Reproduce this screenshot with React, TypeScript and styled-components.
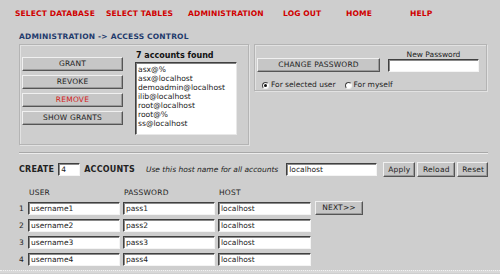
import React from 'react';
import styled, { createGlobalStyle } from 'styled-components';

const GlobalStyle = createGlobalStyle`
  html, body {
    margin: 0;
    padding: 0;
    background: #cecece;
  }
  body {
    font-family: 'DejaVu Sans', Verdana, sans-serif;
    font-size: 8px;
    color: #222222;
  }
`;

const Page = styled.div`
  width: 500px;
  height: 274px;
  box-sizing: border-box;
  background: #cecece;
  overflow: hidden;
  display: flex;
  flex-direction: column;
`;

const Nav = styled.nav`
  display: flex;
  padding: 9px 0 0 15px;
  height: 10px;
`;

const NavLink = styled.a<{ $w: number }>`
  width: ${p => p.$w}px;
  flex: none;
  color: #d00000;
  font-weight: bold;
  font-size: 7.6px;
  text-decoration: none;
  letter-spacing: 0.1px;
  line-height: 10px;
`;

const Title = styled.h1`
  margin: 13px 0 0 19px;
  font-size: 7.5px;
  font-weight: bold;
  color: #1e3a6c;
  line-height: 10px;
  letter-spacing: 0.2px;
`;

const TopRow = styled.div`
  display: flex;
  align-items: flex-start;
  gap: 5px;
  margin: 2px 0 0 19px;
`;

const Panel = styled.div<{ $w: number; $h: number }>`
  width: ${p => p.$w}px;
  height: ${p => p.$h}px;
  box-sizing: border-box;
  border: 1px solid #b4b4b4;
  box-shadow: inset 1px 1px 0 #e2e2e2, 1px 1px 0 #e2e2e2;
  display: flex;
`;

const ButtonColumn = styled.div`
  display: flex;
  flex-direction: column;
  gap: 4px;
  margin: 12px 0 0 2px;
`;

const GrayButton = styled.button<{ $w?: number; $h?: number; $danger?: boolean }>`
  width: ${p => (p.$w ? `${p.$w}px` : 'auto')};
  height: ${p => p.$h ?? 14}px;
  padding: 0 4px;
  box-sizing: border-box;
  background: #c6c6c6;
  border: 1px solid;
  border-color: #f0f0f0 #555555 #555555 #f0f0f0;
  box-shadow: inset -1px -1px 0 #9a9a9a;
  font-family: 'DejaVu Sans', Verdana, sans-serif;
  font-size: 7.5px;
  color: ${p => (p.$danger ? '#d42020' : '#222222')};
  letter-spacing: 0.2px;
  line-height: 12px;
  cursor: pointer;
`;

const ListColumn = styled.div`
  display: flex;
  flex-direction: column;
  margin: 6px 0 0 12px;
`;

const ListLabel = styled.div`
  font-weight: bold;
  font-size: 8px;
  color: #111111;
  line-height: 10px;
  margin-left: 1px;
`;

const ListBox = styled.div`
  width: 102px;
  height: 73px;
  box-sizing: border-box;
  margin-top: 1px;
  background: #ffffff;
  border: 1px solid;
  border-color: #404040 #e8e8e8 #e8e8e8 #404040;
  box-shadow: inset 1px 1px 0 #808080;
  padding: 2px 0 0 2px;
`;

const ListItem = styled.div`
  line-height: 9px;
  font-size: 7.6px;
  color: #222222;
`;

const PwPanelBody = styled.div`
  display: flex;
  flex-direction: column;
  padding: 5px 0 0 2px;
`;

const PwTop = styled.div`
  display: flex;
  align-items: flex-end;
  gap: 8px;
`;

const PwField = styled.div`
  display: flex;
  flex-direction: column;
  align-items: center;
`;

const SmallLabel = styled.div`
  font-size: 7.5px;
  line-height: 9px;
  color: #222222;
`;

const TextInput = styled.input<{ $w: number }>`
  width: ${p => p.$w}px;
  height: 13px;
  box-sizing: border-box;
  padding: 0 2px;
  background: #ffffff;
  border: 1px solid;
  border-color: #404040 #f4f4f4 #f4f4f4 #404040;
  box-shadow: inset 1px 1px 0 #8a8a8a;
  font-family: 'DejaVu Sans', Verdana, sans-serif;
  font-size: 7.5px;
  color: #222222;
  outline: none;
`;

const CountInput = styled(TextInput)`
  margin: 0 4px;
`;

const RadioRow = styled.div`
  display: flex;
  align-items: center;
  margin: 8px 0 0 5px;
  font-size: 7.5px;
`;

const RadioDot = styled.span<{ $on?: boolean }>`
  width: 7px;
  height: 7px;
  box-sizing: border-box;
  border-radius: 50%;
  background: #ffffff;
  border: 1px solid;
  border-color: #404040 #f4f4f4 #f4f4f4 #404040;
  margin-right: 2px;
  display: flex;
  align-items: center;
  justify-content: center;
  &::after {
    content: '';
    width: 3px;
    height: 3px;
    border-radius: 50%;
    background: ${p => (p.$on ? '#111111' : 'transparent')};
  }
`;

const RadioText = styled.span`
  margin-right: 9px;
  line-height: 10px;
`;

const Separator = styled.div`
  margin: 7px 12px 0 19px;
  height: 0;
  border-top: 1px solid #a8a8a8;
  border-bottom: 1px solid #ececec;
`;

const CreateRow = styled.div`
  display: flex;
  align-items: center;
  margin: 8px 0 0 19px;
  height: 15px;
`;

const BoldWord = styled.span`
  font-weight: bold;
  font-size: 8px;
  color: #222222;
  letter-spacing: 0.2px;
`;

const Hint = styled.span`
  font-style: italic;
  font-size: 7.5px;
  color: #222222;
  margin: 0 8px 0 11px;
`;

const ButtonGroup = styled.div`
  display: flex;
  gap: 2px;
  margin-left: 6px;
`;

const Grid = styled.div`
  display: grid;
  grid-template-columns: 9px 95px 95px 97px auto;
  grid-template-rows: 9px 14px 13px 13px 13px;
  row-gap: 4px;
  margin: 11px 0 0 19px;
  align-items: center;
`;

const HeadCell = styled.div`
  font-size: 7.5px;
  color: #222222;
  line-height: 9px;
  letter-spacing: 0.2px;
  margin-left: 1px;
`;

const RowNum = styled.div`
  font-size: 7.5px;
  color: #222222;
`;

const BottomRule = styled.div`
  margin-top: auto;
  margin-bottom: 1px;
  height: 2px;
  border-top: 1px dotted #f2f2f2;
  background: #d8d8d8;
`;

const accounts = [
  'asx@%',
  'asx@localhost',
  'demoadmin@localhost',
  'ilib@localhost',
  'root@localhost',
  'root@%',
  'ss@localhost',
];

const navItems: [string, number][] = [
  ['SELECT DATABASE', 91],
  ['SELECT TABLES', 82],
  ['ADMINISTRATION', 95],
  ['LOG OUT', 63],
  ['HOME', 64],
  ['HELP', 40],
];

const rows = [1, 2, 3, 4];

export default function App() {
  return (
    <Page>
      <GlobalStyle />
      <Nav>
        {navItems.map(([label, w]) => (
          <NavLink key={label} href="#" $w={w}>
            {label}
          </NavLink>
        ))}
      </Nav>
      <Title>ADMINISTRATION -&gt; ACCESS CONTROL</Title>
      <TopRow>
        <Panel $w={230} $h={101}>
          <ButtonColumn>
            <GrayButton $w={101}>GRANT</GrayButton>
            <GrayButton $w={101}>REVOKE</GrayButton>
            <GrayButton $w={101} $danger>
              REMOVE
            </GrayButton>
            <GrayButton $w={101}>SHOW GRANTS</GrayButton>
          </ButtonColumn>
          <ListColumn>
            <ListLabel>7 accounts found</ListLabel>
            <ListBox>
              {accounts.map(a => (
                <ListItem key={a}>{a}</ListItem>
              ))}
            </ListBox>
          </ListColumn>
        </Panel>
        <Panel $w={233} $h={47}>
          <PwPanelBody>
            <PwTop>
              <GrayButton $w={123}>CHANGE PASSWORD</GrayButton>
              <PwField>
                <SmallLabel>New Password</SmallLabel>
                <TextInput $w={91} type="password" />
              </PwField>
            </PwTop>
            <RadioRow>
              <RadioDot $on />
              <RadioText>For selected user</RadioText>
              <RadioDot />
              <RadioText>For myself</RadioText>
            </RadioRow>
          </PwPanelBody>
        </Panel>
      </TopRow>
      <Separator />
      <CreateRow>
        <BoldWord>CREATE</BoldWord>
        <CountInput $w={22} defaultValue="4" />
        <BoldWord>ACCOUNTS</BoldWord>
        <Hint>Use this host name for all accounts</Hint>
        <TextInput $w={91} defaultValue="localhost" />
        <ButtonGroup>
          <GrayButton $w={32} $h={15}>Apply</GrayButton>
          <GrayButton $w={38} $h={15}>Reload</GrayButton>
          <GrayButton $w={31} $h={15}>Reset</GrayButton>
        </ButtonGroup>
      </CreateRow>
      <Grid>
        <span />
        <HeadCell>USER</HeadCell>
        <HeadCell>PASSWORD</HeadCell>
        <HeadCell>HOST</HeadCell>
        <span />
        {rows.map(n => (
          <React.Fragment key={n}>
            <RowNum>{n}</RowNum>
            <TextInput $w={92} defaultValue={`username${n}`} />
            <TextInput $w={92} defaultValue={`pass${n}`} />
            <TextInput $w={93} defaultValue="localhost" />
            {n === 1 ? <GrayButton $w={48}>NEXT&gt;&gt;</GrayButton> : <span />}
          </React.Fragment>
        ))}
      </Grid>
      <BottomRule />
    </Page>
  );
}
